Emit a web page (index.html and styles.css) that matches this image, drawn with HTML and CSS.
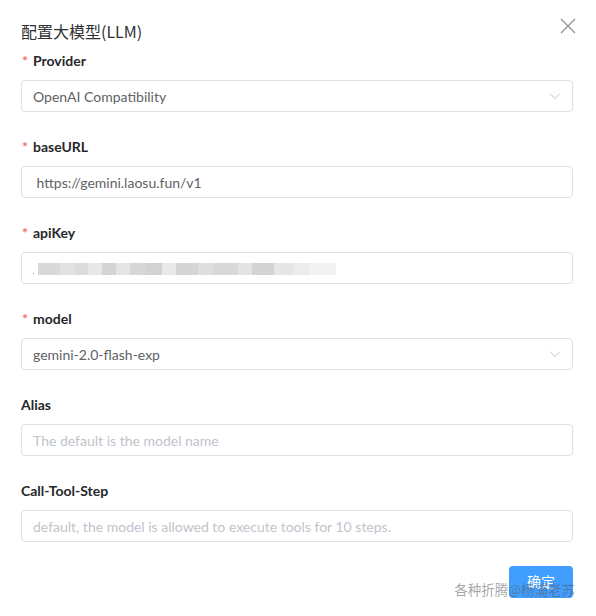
FILE: index.html
```html
<!DOCTYPE html>
<html lang="zh">
<head>
<meta charset="utf-8">
<title>配置大模型(LLM)</title>
<link rel="stylesheet" href="styles.css">
</head>
<body>
<div class="dialog">
  <div class="dialog-header">
    <span class="dialog-title">配置大模型(LLM)</span>
    <svg class="close" width="16" height="16" viewBox="0 0 16 16" aria-label="close">
      <path d="M1 1 L15 15 M15 1 L1 15" stroke="#909399" stroke-width="1.3" fill="none"/>
    </svg>
  </div>
  <form class="form">
    <div class="item">
      <label class="label"><span class="req">*</span>Provider</label>
      <div class="input select">
        <span class="value">OpenAI Compatibility</span>
        <svg class="arrow" width="12" height="8" viewBox="0 0 12 8"><path d="M1 1.5 L6 6.5 L11 1.5" stroke="#c0c4cc" stroke-width="1" fill="none"/></svg>
      </div>
    </div>
    <div class="item">
      <label class="label"><span class="req">*</span>baseURL</label>
      <div class="input"><span class="value">&nbsp;https://gemini.laosu.fun/v1</span></div>
    </div>
    <div class="item">
      <label class="label"><span class="req">*</span>apiKey</label>
      <div class="input"><span class="dot"></span><span class="blur"></span></div>
    </div>
    <div class="item">
      <label class="label"><span class="req">*</span>model</label>
      <div class="input select">
        <span class="value">gemini-2.0-flash-exp</span>
        <svg class="arrow" width="12" height="8" viewBox="0 0 12 8"><path d="M1 1.5 L6 6.5 L11 1.5" stroke="#c0c4cc" stroke-width="1" fill="none"/></svg>
      </div>
    </div>
    <div class="item">
      <label class="label">Alias</label>
      <div class="input"><span class="placeholder">The default is the model name</span></div>
    </div>
    <div class="item">
      <label class="label">Call-Tool-Step</label>
      <div class="input"><span class="placeholder">default, the model is allowed to execute tools for 10 steps.</span></div>
    </div>
  </form>
  <div class="footer">
    <button class="btn" type="button">确定</button>
    <span class="watermark">各种折腾@杨浦老苏</span>
  </div>
</div>
</body>
</html>
```
FILE: styles.css
```css
html, body {
  margin: 0;
  padding: 0;
  background: #ffffff;
}
body {
  font-family: "Lato", "Noto Sans CJK SC", sans-serif;
  color: #303133;
}
.dialog {
  width: 596px;
  box-sizing: border-box;
  padding: 19px 23px 0 21px;
}
.dialog-header {
  display: flex;
  justify-content: space-between;
  align-items: flex-start;
  height: 24px;
  margin-bottom: 7px;
}
.dialog-title {
  font-family: "Noto Sans CJK SC", sans-serif;
  font-size: 16px;
  line-height: 24px;
  color: #303133;
}
.close {
  margin-top: -1px;
  margin-right: -3px;
}
.form {
  margin: 0;
}
.item {
  margin-bottom: 24px;
}
.label {
  display: block;
  font-size: 14px;
  font-weight: 700;
  line-height: 22px;
  height: 22px;
  margin-bottom: 8px;
  color: #26272b;
}
.req {
  color: #f56c6c;
  margin-right: 5px;
  margin-left: 1px;
  font-weight: 700;
}
.input {
  height: 32px;
  box-sizing: border-box;
  border: 1px solid #dcdfe6;
  border-radius: 4px;
  padding: 0 11px;
  display: flex;
  align-items: center;
  font-size: 14px;
  color: #606266;
  position: relative;
}
.select {
  justify-content: space-between;
}
.arrow {
  margin-right: 0;
}
.placeholder {
  color: #c0c4cc;
}
.dot {
  width: 1px;
  height: 1px;
  background: #888;
  margin-top: 10px;
}
.blur {
  width: 298px;
  height: 12px;
  margin-left: 4px;
  margin-top: 2px;
  background: linear-gradient(to right,
    #d9d9d9 0, #d9d9d9 22px,
    #e2e2e2 22px, #e2e2e2 36px,
    #dcdcdc 36px, #dcdcdc 50px,
    #e8e8e8 50px, #e8e8e8 64px,
    #d4d4d4 64px, #d4d4d4 78px,
    #e5e5e5 78px, #e5e5e5 92px,
    #d6d6d6 92px, #d6d6d6 108px,
    #d2d2d2 108px, #d2d2d2 124px,
    #e9e9e9 124px, #e9e9e9 138px,
    #d5d5d5 138px, #d5d5d5 160px,
    #dedede 160px, #dedede 176px,
    #d8d8d8 176px, #d8d8d8 200px,
    #e4e4e4 200px, #e4e4e4 214px,
    #d3d3d3 214px, #d3d3d3 236px,
    #e6e6e6 236px, #e6e6e6 256px,
    #ececec 256px, #ececec 272px,
    #f3f3f3 272px, #f3f3f3 298px);
  filter: blur(0.7px);
}
.footer {
  display: flex;
  justify-content: flex-end;
  position: relative;
  margin-top: 0;
}
.btn {
  width: 64px;
  height: 32px;
  border: none;
  border-radius: 4px;
  background: #409eff;
  color: #ffffff;
  font-family: "Noto Sans CJK SC", sans-serif;
  font-size: 14px;
  padding: 0;
  padding-bottom: 2px;
}
.watermark {
  position: absolute;
  right: -2px;
  top: 13px;
  font-family: "Noto Sans CJK SC", sans-serif;
  font-size: 13.5px;
  line-height: 20px;
  color: rgba(90, 90, 90, 0.55);
  white-space: nowrap;
}
```
